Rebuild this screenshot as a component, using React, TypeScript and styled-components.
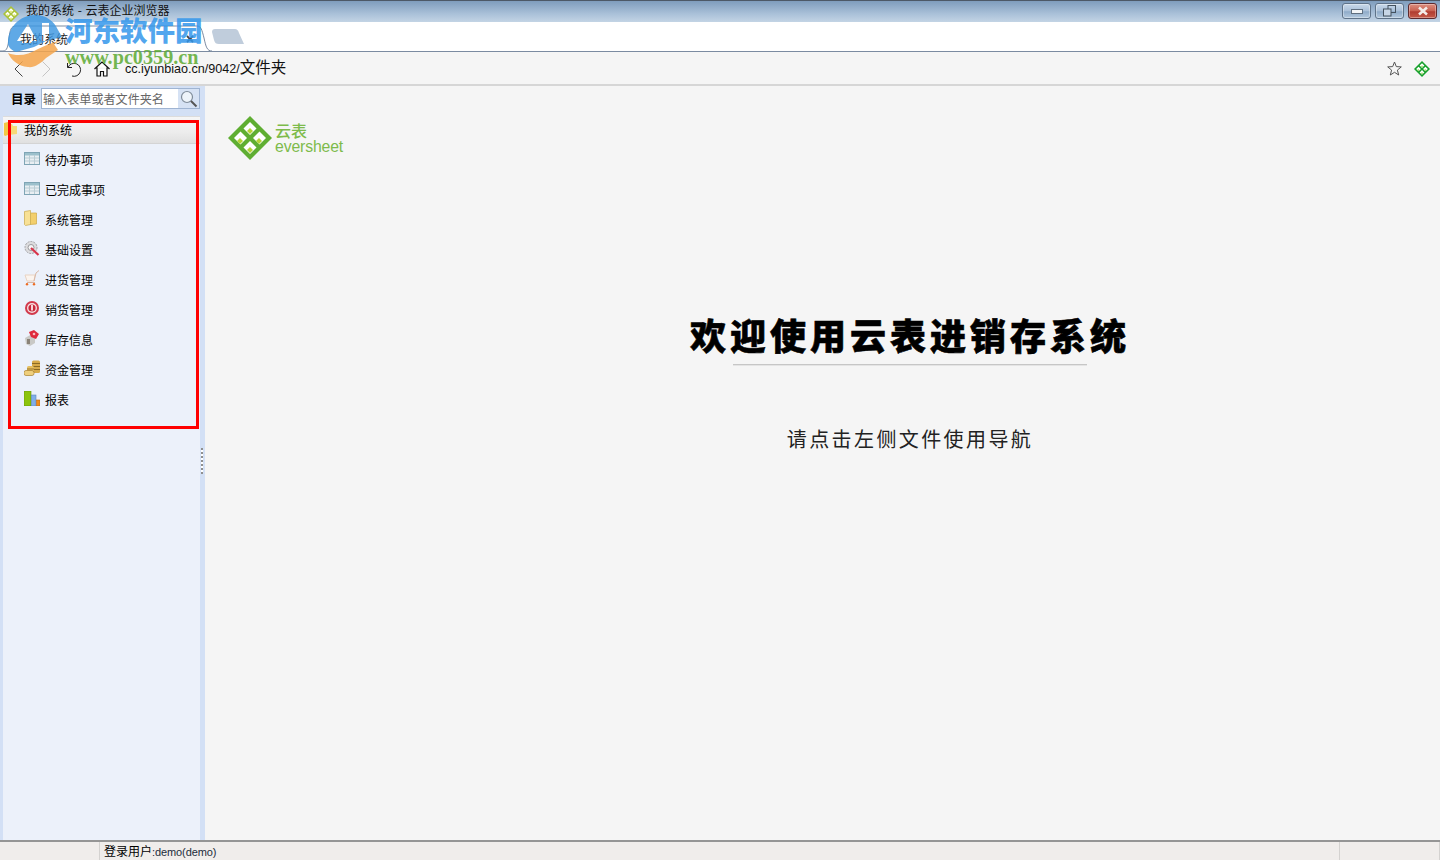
import React from 'react';
import styled, { createGlobalStyle } from 'styled-components';

const cjk = `"Noto Sans CJK SC", "Liberation Sans", sans-serif`;

const GlobalStyle = createGlobalStyle`
  html, body {
    margin: 0;
    padding: 0;
    height: 100%;
    overflow: hidden;
    background: #f5f5f5;
  }
  * { box-sizing: border-box; }
`;

const Page = styled.div`
  position: relative;
  width: 1440px;
  height: 860px;
  display: flex;
  flex-direction: column;
  overflow: hidden;
  font-family: ${cjk};
  color: #000;
`;

const TitleBar = styled.div`
  height: 22px;
  flex: none;
  display: flex;
  align-items: flex-start;
  padding: 0 3px;
  border-top: 1px solid #4d5967;
  background: linear-gradient(#7f9dbd, #a9c0d8 60%, #c3d4e5);
`;

const TitleIcon = styled.div`
  height: 16px;
  margin-top: 2px;
`;

const TitleText = styled.span`
  margin-left: 7px;
  font-size: 12px;
  line-height: 18px;
  word-spacing: 1px;
  color: #111;
`;

const WindowButtons = styled.div`
  margin-left: auto;
  display: flex;
  gap: 4px;
  margin-top: 2px;
`;

const WindowButton = styled.div<{ $close?: boolean }>`
  width: 29px;
  height: 16px;
  display: flex;
  align-items: center;
  justify-content: center;
  border: 1px solid ${(p) => (p.$close ? '#5e2a2e' : '#5f7389')};
  border-radius: 3px;
  background: ${(p) =>
    p.$close
      ? 'linear-gradient(#dc8f80, #c8604f 50%, #b03c30 55%, #c55a48)'
      : 'linear-gradient(#c9d9ea, #a9c0d8 50%, #8fabc9 55%, #b3c9de)'};
  box-shadow: inset 0 0 0 1px rgba(255, 255, 255, 0.35);
`;

const TabBar = styled.div`
  position: relative;
  height: 30px;
  flex: none;
  background: #fff;
  border-bottom: 1px solid #7b8ba1;
`;

const TabOutline = styled.svg`
  position: absolute;
  left: 0;
  top: 3px;
`;

const TabLabel = styled.span`
  position: absolute;
  left: 20px;
  top: 9px;
  font-size: 12px;
  line-height: 16px;
  color: #222;
`;

const AddressBar = styled.div`
  height: 34px;
  flex: none;
  display: flex;
  align-items: center;
  padding: 1px 10px 0 14px;
  background: #f5f5f5;
  border-bottom: 2px solid #d6d6d6;
`;

const ToolIcon = styled.svg<{ $gap: number }>`
  flex: none;
  margin-right: ${(p) => p.$gap}px;
`;

const Address = styled.span`
  font-family: "Liberation Sans", sans-serif;
  font-size: 12.6px;
  line-height: 20px;
  color: #111;
  margin-top: -3px;
  flex: 1;
`;

const AddressCjk = styled.span`
  font-family: ${cjk};
  font-size: 15.5px;
`;

const Body = styled.div`
  flex: 1;
  min-height: 0;
  display: flex;
`;

const Sidebar = styled.aside`
  width: 205px;
  flex: none;
  display: flex;
  flex-direction: column;
  padding: 0 5px 0 3px;
  background: #d3e0f5;
`;

const SearchRow = styled.div`
  height: 30px;
  flex: none;
  display: flex;
  align-items: center;
  padding: 0 0 5px 8px;
  margin-right: -4px;
`;

const SearchLabel = styled.span`
  width: 30px;
  flex: none;
  font-size: 12.5px;
  font-weight: 700;
`;

const SearchBox = styled.div`
  width: 159px;
  height: 21px;
  display: flex;
  border: 1px solid #9fb4d2;
  background: #fff;
`;

const SearchInput = styled.input`
  flex: 1;
  min-width: 0;
  border: 0;
  padding: 0 1px;
  font-family: ${cjk};
  font-size: 12.1px;
  outline: none;
  background: transparent;
  &::placeholder {
    color: #666;
    opacity: 1;
  }
`;

const SearchButton = styled.div`
  width: 21px;
  flex: none;
  display: flex;
  align-items: center;
  justify-content: center;
  background: #d6e2f4;
`;

const Tree = styled.div`
  flex: 1;
  background: #ecf1fa;
  display: flex;
  flex-direction: column;
`;

const RootRow = styled.div`
  height: 28px;
  flex: none;
  display: flex;
  align-items: center;
  padding: 0 0 2px 1px;
  gap: 7px;
  font-size: 12px;
  background: linear-gradient(#f6f6f6, #ececec 60%, #e0e0e0);
  border-top: 1px solid #dcdcdc;
  border-bottom: 1px solid #d4d4d4;
`;

const NavRow = styled.div`
  height: 30px;
  flex: none;
  display: flex;
  align-items: center;
  padding: 1px 0 0 21px;
  gap: 5px;
  font-size: 12px;
  color: #000;
`;

const NavIcon = styled.svg`
  flex: none;
  margin-top: -3px;
`;

const Splitter = styled.div`
  position: absolute;
  left: 201px;
  top: 448px;
  width: 2px;
  height: 26px;
  background: repeating-linear-gradient(#8f8f8f 0 2px, #fff 2px 4px);
`;

const Main = styled.main`
  flex: 1;
  min-width: 0;
  display: flex;
  flex-direction: column;
  padding: 30px 0 0 23px;
  background: #f5f5f5;
`;

const Logo = styled.div`
  display: flex;
  align-items: center;
  gap: 3px;
`;

const LogoWords = styled.div`
  display: flex;
  flex-direction: column;
  color: #7dbb4b;
`;

const LogoCn = styled.span`
  font-size: 16px;
  line-height: 17px;
  font-weight: 500;
`;

const LogoEn = styled.span`
  font-family: "Liberation Sans", sans-serif;
  font-size: 15.8px;
  line-height: 15px;
  letter-spacing: -0.15px;
`;

const Welcome = styled.section`
  width: 440px;
  margin: 151px 0 0 462px;
  display: flex;
  flex-direction: column;
  align-items: center;
`;

const Heading = styled.h1`
  margin: 0;
  width: 440px;
  font-size: 36px;
  line-height: 46px;
  font-weight: 900;
  letter-spacing: 4px;
  text-align: center;
  white-space: nowrap;
  -webkit-text-stroke: 0.6px #000;
`;

const Rule = styled.div`
  width: 354px;
  height: 1px;
  margin-top: 7px;
  background: #c6c6c6;
  box-shadow: 0 1px 0 #e4e4e4;
`;

const SubHeading = styled.p`
  margin: 59px 0 0;
  font-size: 20px;
  line-height: 30px;
  letter-spacing: 2.4px;
  color: #222;
  white-space: nowrap;
`;

const StatusBar = styled.footer`
  height: 20px;
  flex: none;
  display: flex;
  border-top: 2px solid #959595;
  background: #f0edeb;
`;

const StatusCell = styled.div<{ $width?: number }>`
  ${(p) => (p.$width ? `width: ${p.$width}px; flex: none;` : 'flex: 1;')}
  height: 18px;
  padding-left: 4px;
  border-right: 1px solid #d4d2d0;
  font-size: 12px;
  line-height: 18px;
  white-space: nowrap;
`;

const StatusLatin = styled.span`
  font-family: "Liberation Sans", sans-serif;
  font-size: 11px;
  letter-spacing: -0.1px;
  color: #1c2b3a;
`;

const Highlight = styled.div`
  position: absolute;
  left: 8px;
  top: 120px;
  width: 191px;
  height: 309px;
  border: 3px solid #ff0000;
  pointer-events: none;
`;

const Watermark = styled.div`
  position: absolute;
  left: 4px;
  top: 14px;
  display: flex;
  pointer-events: none;
`;

const WatermarkWords = styled.div`
  margin-left: -1px;
  display: flex;
  flex-direction: column;
  font-family: "Liberation Serif", "Noto Sans CJK SC", serif;
  font-weight: 700;
  white-space: nowrap;
`;

const WatermarkCn = styled.span`
  font-family: "Noto Sans CJK SC", serif;
  font-size: 27.5px;
  font-weight: 900;
  line-height: 30px;
  color: rgba(50, 150, 235, 0.85);
`;

const WatermarkUrl = styled.span`
  font-size: 20.2px;
  line-height: 20px;
  margin-top: 3px;
  color: rgba(92, 170, 50, 0.85);
`;

const Diamond = ({ size, dark, light }: { size: number; dark: string; light: string }) => (
  <svg width={size} height={size} viewBox="0 0 44 44">
    <path d="M22 0 44 22 22 44 0 22Z" fill={dark} />
    <path d="M22 6 28.5 12.5 22 19 15.5 12.5Z" fill="#fff" />
    <path d="M22 25 28.5 31.5 22 38 15.5 31.5Z" fill="#fff" />
    <path d="M12.5 15.5 19 22 12.5 28.5 6 22Z" fill="#fff" />
    <path d="M31.5 15.5 38 22 31.5 28.5 25 22Z" fill="#fff" />
    <path d="M22 12 25 15 22 18 19 15Z" fill={light} />
    <path d="M22 31 25 34 22 37 19 34Z" fill={light} />
    <path d="M12 22 15 25 12 28 9 25Z" fill={light} />
    <path d="M31 22 34 25 31 28 28 25Z" fill={light} />
  </svg>
);

const TableIcon = () => (
  <NavIcon width="16" height="13" viewBox="0 0 16 13">
    <rect x="0.5" y="0.5" width="15" height="12" fill="#e8eef2" stroke="#7fa5b5" />
    <rect x="1" y="1" width="14" height="2.5" fill="#9cc0cc" />
    <path d="M1 6h14M1 9h14M5.5 3v9M10.5 3v9" stroke="#b8ccd4" />
  </NavIcon>
);

const FolderIcon = () => (
  <NavIcon width="16" height="16" viewBox="0 0 16 16">
    <path d="M6 3h6.500v11L6 14.500Z" fill="#f3cf6c" stroke="#cfa945" strokeWidth="0.7" />
    <path d="M0.500 1.500 6.500 0.500V14.500L1.500 15.500 0.500 14.500Z" fill="#f8e196" stroke="#c9a94b" strokeWidth="0.7" />
  </NavIcon>
);

const SettingsIcon = () => (
  <NavIcon width="16" height="16" viewBox="0 0 16 16">
    <circle cx="7" cy="7.500" r="6" fill="#dcdcde" stroke="#a0a0a4" strokeDasharray="2 1" />
    <circle cx="7" cy="7.500" r="3" fill="#f7f7f7" stroke="#9a9a9e" />
    <path d="M7 8 14.500 15" stroke="#d8344a" strokeWidth="2.200" />
  </NavIcon>
);

const CartIcon = () => (
  <NavIcon width="16" height="16" viewBox="0 0 16 16">
    <path d="M1 5h10l-1 6H3Z" fill="#fbf4ee" stroke="#e9d3c3" />
    <path d="M10 11 12 3 15 0.5M3 12.5h8" fill="none" stroke="#d9b8a5" />
    <circle cx="3" cy="14.2" r="1.2" fill="#ee6a20" />
    <circle cx="10" cy="14.2" r="1.2" fill="#ee6a20" />
  </NavIcon>
);

const PowerIcon = () => (
  <NavIcon width="16" height="16" viewBox="0 0 16 16">
    <circle cx="8" cy="8" r="7" fill="#d23a4c" />
    <circle cx="8" cy="8" r="5" fill="#f6dfe0" />
    <circle cx="8" cy="8" r="3.6" fill="#c9283a" />
    <rect x="7.2" y="5" width="1.6" height="5.5" fill="#fff" />
  </NavIcon>
);

const StockIcon = () => (
  <NavIcon width="16" height="16" viewBox="0 0 16 16">
    <path d="M1 8 8 4l3 4v5l-5 3-4-2Z" fill="#c9c9c6" />
    <path d="M3 9h3v5H3Z" fill="#8a8378" />
    <path d="M5 2 10 0l5 4-3 5-5-2Z" fill="#df2a3c" />
    <circle cx="10" cy="4" r="1.3" fill="#f7b9bf" />
  </NavIcon>
);

const CoinsIcon = () => (
  <NavIcon width="16" height="16" viewBox="0 0 16 16">
    <rect x="8" y="0.500" width="8" height="12.500" rx="1.5" fill="#d7aa49" />
    <path d="M8 3.500h8M8 6.500h8M8 9.500h8" stroke="#8b6a24" />
    <rect x="3" y="6" width="7" height="7" rx="1.5" fill="#e6c062" />
    <path d="M3 9h7M3 11.500h7" stroke="#96742a" />
    <rect x="0" y="10.500" width="10" height="5" rx="2" fill="#efcf7c" stroke="#a67f30" strokeWidth="0.7" />
  </NavIcon>
);

const ChartIcon = () => (
  <NavIcon width="16" height="15" viewBox="0 0 16 15">
    <rect x="0" y="0" width="7" height="15" fill="#8cc40c" stroke="#5f8e0a" strokeWidth="0.6" />
    <rect x="7.5" y="4" width="4.5" height="11" fill="#80aee8" stroke="#5e86bd" strokeWidth="0.6" />
    <rect x="12.5" y="9" width="3.5" height="6" fill="#f08a1a" stroke="#b9660f" strokeWidth="0.6" />
  </NavIcon>
);

const navItems = [
  { label: '待办事项', icon: <TableIcon /> },
  { label: '已完成事项', icon: <TableIcon /> },
  { label: '系统管理', icon: <FolderIcon /> },
  { label: '基础设置', icon: <SettingsIcon /> },
  { label: '进货管理', icon: <CartIcon /> },
  { label: '销货管理', icon: <PowerIcon /> },
  { label: '库存信息', icon: <StockIcon /> },
  { label: '资金管理', icon: <CoinsIcon /> },
  { label: '报表', icon: <ChartIcon /> },
];

export default function App() {
  return (
    <Page>
      <GlobalStyle />
      <TitleBar>
        <TitleIcon>
          <Diamond size={16} dark="#a9c23a" light="#dfe86a" />
        </TitleIcon>
        <TitleText>我的系统 - 云表企业浏览器</TitleText>
        <WindowButtons>
          <WindowButton>
            <svg width="12" height="5" viewBox="0 0 12 5">
              <rect x="0.5" y="0.5" width="11" height="4" fill="#f2f5f8" stroke="#5f6f80" />
            </svg>
          </WindowButton>
          <WindowButton>
            <svg width="13" height="12" viewBox="0 0 13 12">
              <rect x="5" y="0.5" width="7.5" height="7" fill="none" stroke="#44525f" />
              <rect x="0.5" y="4" width="7.5" height="7" fill="#c7d6e6" stroke="#44525f" />
            </svg>
          </WindowButton>
          <WindowButton $close>
            <svg width="12" height="10" viewBox="0 0 12 10">
              <path d="M2 1.5 10 8.5M10 1.5 2 8.5" stroke="#f4ece8" strokeWidth="2.6" />
            </svg>
          </WindowButton>
        </WindowButtons>
      </TitleBar>

      <TabBar>
        <TabOutline width="250" height="27" viewBox="0 0 250 27">
          <path d="M0 26H3C7 26 8 22 9 13 10 5 11 1 16 1H197C201 1 202 5 204 13 206 22 207 26 212 26" fill="#fff" stroke="#7b8ba1" />
          <path d="M212 7C212 5 213 4 215 4H235C237 4 238 5 239 8L244 19H219C216 19 215 18 214 15Z" fill="#c0cddc" />
          <path d="M187 11 193 17M193 11 187 17" stroke="#444" strokeWidth="1.8" />
        </TabOutline>
        <TabLabel>我的系统</TabLabel>
      </TabBar>

      <AddressBar>
        <ToolIcon $gap={19} width="9" height="16" viewBox="0 0 9 16">
          <path d="M8.5 0.5 1 8l7.5 7.5" fill="none" stroke="#444" />
        </ToolIcon>
        <ToolIcon $gap={15} width="9" height="16" viewBox="0 0 9 16">
          <path d="M0.5 0.5 8 8l-7.5 7.5" fill="none" stroke="#c4c4c4" />
        </ToolIcon>
        <ToolIcon $gap={12} width="16" height="16" viewBox="0 0 16 16">
          <path d="M1.500 2v4.500h4.500M2 6.500A6.500 6.500 0 1 1 6 15" fill="none" stroke="#222" />
        </ToolIcon>
        <ToolIcon $gap={15} width="16" height="16" viewBox="0 0 16 16">
          <path d="M0.500 8 8 1l7.500 7M3 6.500V15h3.500v-4.500h3V15H13V6.500" fill="#fff" stroke="#111" strokeWidth="1.200" />
        </ToolIcon>
        <Address>
          cc.iyunbiao.cn/9042/<AddressCjk>文件夹</AddressCjk>
        </Address>
        <ToolIcon $gap={12} width="15" height="15" viewBox="0 0 15 15">
          <path d="M7.500 1 9.300 5.600 14.300 5.900 10.400 9.100 11.700 14 7.500 11.300 3.300 14 4.600 9.100 0.700 5.900 5.700 5.600Z" fill="none" stroke="#555" />
        </ToolIcon>
        <Diamond size={16} dark="#16a02c" light="#a6d86a" />
      </AddressBar>

      <Body>
        <Sidebar>
          <SearchRow>
            <SearchLabel>目录</SearchLabel>
            <SearchBox>
              <SearchInput placeholder="输入表单或者文件夹名" />
              <SearchButton>
                <svg width="18" height="18" viewBox="0 0 18 18">
                  <circle cx="7" cy="7" r="5.500" fill="#eef4fa" stroke="#7f8c9a" strokeWidth="1.200" />
                  <path d="M11 11 16.500 16.500" stroke="#555" strokeWidth="2" />
                </svg>
              </SearchButton>
            </SearchBox>
          </SearchRow>
          <Tree>
            <RootRow>
              <svg width="13" height="14" viewBox="0 0 13 14">
                <path d="M0 1 4 0V13L1 14 0 13Z" fill="#f3c845" />
                <path d="M4 2h4l1 2h4v8l-9 1Z" fill="#f7d978" />
              </svg>
              我的系统
            </RootRow>
            {navItems.map((item) => (
              <NavRow key={item.label}>
                {item.icon}
                {item.label}
              </NavRow>
            ))}
          </Tree>
        </Sidebar>
        <Main>
          <Logo>
            <Diamond size={44} dark="#5fae32" light="#b4d335" />
            <LogoWords>
              <LogoCn>云表</LogoCn>
              <LogoEn>eversheet</LogoEn>
            </LogoWords>
          </Logo>
          <Welcome>
            <Heading>欢迎使用云表进销存系统</Heading>
            <Rule />
            <SubHeading>请点击左侧文件使用导航</SubHeading>
          </Welcome>
        </Main>
      </Body>

      <StatusBar>
        <StatusCell $width={100} />
        <StatusCell $width={1240}>
          登录用户<StatusLatin>:demo(demo)</StatusLatin>
        </StatusCell>
        <StatusCell />
      </StatusBar>

      <Splitter />
      <Highlight />
      <Watermark>
        <svg width="62" height="56" viewBox="0 0 62 56">
          <path fillRule="evenodd" d="M4 29C4 13 16 1 31 1 42 1 50 7 54 16L58 23 42 27 30 33 12 38C7 36 4 33 4 29ZM13 27 24 10 33 27 28 27 28 29 18 29 18 27ZM38 9H45V27H38Z" fill="rgba(60,150,225,0.82)" />
          <path d="M4 39C14 43 24 41 34 35 42 31 50 28 58 26L50 30 54 36 42 44C36 50 30 54 24 53 14 52 7 46 4 39Z" fill="rgba(245,165,75,0.85)" />
        </svg>
        <WatermarkWords>
          <WatermarkCn>河东软件园</WatermarkCn>
          <WatermarkUrl>www.pc0359.cn</WatermarkUrl>
        </WatermarkWords>
      </Watermark>
    </Page>
  );
}
